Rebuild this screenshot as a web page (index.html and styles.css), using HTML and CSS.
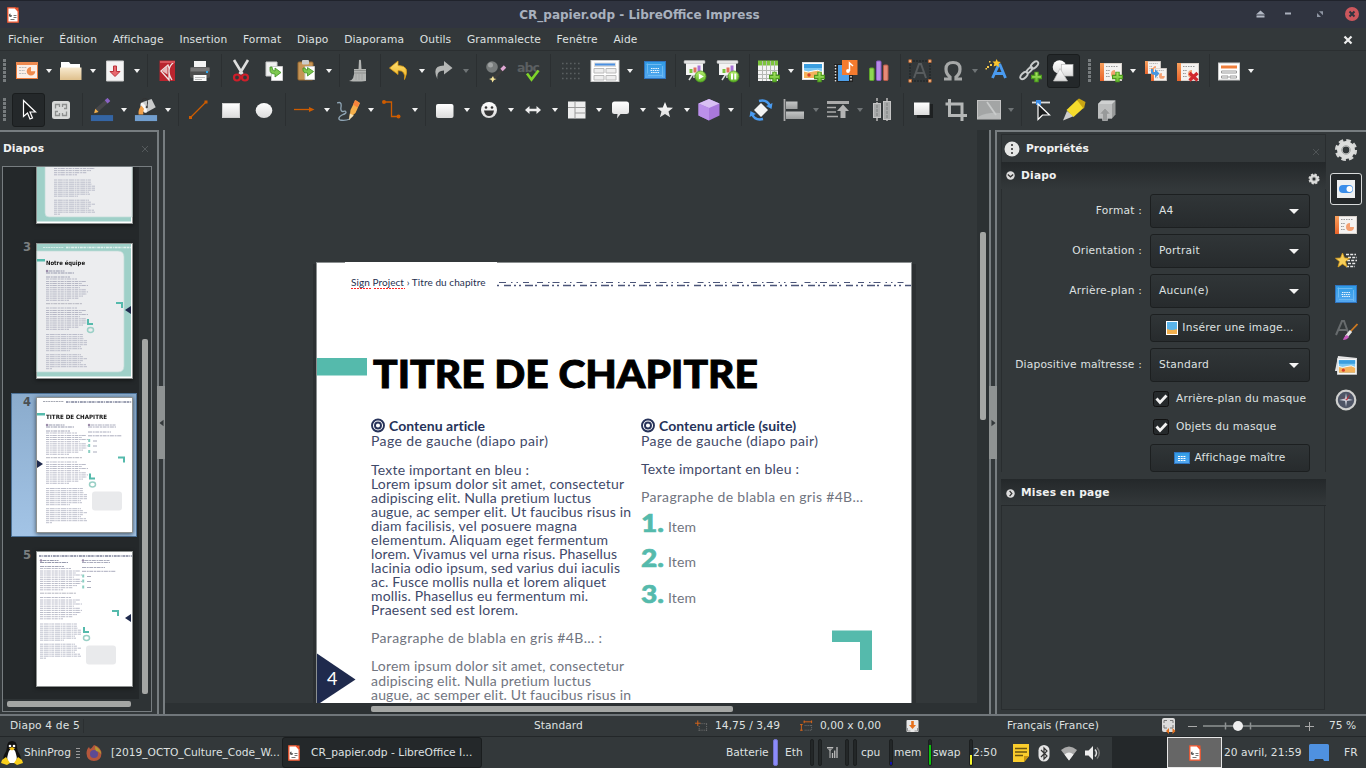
FILE: index.html
```html
<!DOCTYPE html>
<html lang="fr">
<head>
<meta charset="utf-8">
<title>CR_papier.odp - LibreOffice Impress</title>
<link rel="stylesheet" href="styles.css">
</head>
<body>
<svg class="defs" width="0" height="0" aria-hidden="true">
  <defs>
    <linearGradient id="gW" x1="0" y1="0" x2="0" y2="1"><stop offset="0" stop-color="#fff"/><stop offset="1" stop-color="#dcdcdc"/></linearGradient>
    <linearGradient id="gG" x1="0" y1="0" x2="0" y2="1"><stop offset="0" stop-color="#c4c6c6"/><stop offset="1" stop-color="#9c9e9e"/></linearGradient>
    <linearGradient id="gO" x1="0" y1="0" x2="0" y2="1"><stop offset="0" stop-color="#f9a05c"/><stop offset="1" stop-color="#e8632a"/></linearGradient>
    <linearGradient id="gB" x1="0" y1="0" x2="0" y2="1"><stop offset="0" stop-color="#2f9be4"/><stop offset="1" stop-color="#55a8f0"/></linearGradient>
    <linearGradient id="gY" x1="0" y1="0" x2="0" y2="1"><stop offset="0" stop-color="#ffe277"/><stop offset="1" stop-color="#eeb01e"/></linearGradient>
    <linearGradient id="gGr" x1="0" y1="0" x2="0" y2="1"><stop offset="0" stop-color="#b4ec6a"/><stop offset="1" stop-color="#5fb52a"/></linearGradient>
    <linearGradient id="gF" x1="0" y1="0" x2="0" y2="1"><stop offset="0" stop-color="#f8ead0"/><stop offset="1" stop-color="#dfc08c"/></linearGradient>
    <symbol id="plus" viewBox="0 0 10 10"><path d="M3.500 .5h3v3h3v3h-3v3h-3v-3h-3v-3h3z" fill="url(#gGr)" stroke="#4c9a1e"/></symbol>
    <symbol id="slide" viewBox="0 0 22 18"><rect x=".5" y=".5" width="21" height="17" fill="#f5f3f1" stroke="#d8d2cc"/><rect width="4" height="18" fill="url(#gO)"/><path d="M6 3.500h12" stroke="#999" stroke-dasharray="1.500 1"/><path d="M6 7.500h4M6 10.500h3M6 13.500h4" stroke="#999" stroke-dasharray="1.500 .7"/><path d="M15 7a4 4 0 1 0 4 4h-4z" fill="#f4a071"/></symbol>
    <symbol id="doc" viewBox="0 0 12 16"><path d="M.8.8h7.200l3.200 3.500v10.900H.8z" fill="#fff" stroke="#f0542c" stroke-width="1.300"/><path d="M7.500 .5h4V5z" fill="#f0542c"/><path d="M3.500 6.500a1.700 1.700 0 1 0 1.700 1.700H3.500z" fill="#555"/><path d="M6.500 8.500h3M6.500 10.500h3M3.500 12.500h4" stroke="#777"/></symbol>
    <symbol id="master" viewBox="0 0 22 18"><rect x=".5" y=".5" width="21" height="17" fill="url(#gB)" stroke="#2f74c0"/><path d="M2.500 3.500h15M3.500 2.500v10M4 14.500h15M18.500 5v11" stroke="#6db9f3" fill="none"/><path d="M7 7.500h8M6.500 9.500h9M7 11.500h8" stroke="#fff" stroke-width=".9" stroke-dasharray="1.500 .7"/></symbol>
    <symbol id="beach" viewBox="0 0 22 18"><rect x=".5" y=".5" width="21" height="17" fill="#fff" stroke="#ddd"/><rect x="2" y="2" width="18" height="14" fill="#7cc8f2"/><path d="M2 2h18v4H2z" fill="#3a9ee0"/><path d="M2 9q4 2 9 0t9 1v6H2z" fill="#f4b35c"/><path d="M2 9q4 2 9 0t9 1" stroke="#fff" fill="none"/><circle cx="7" cy="13" r="1.700" fill="#d9402a"/></symbol>
    <symbol id="screen" viewBox="0 0 24 24"><path d="M10 15l-4 6M12 14l5 7M11 14v5" stroke="#ddd" stroke-width="1.500"/><rect x="3" y="4" width="17" height="12" fill="#f4f4f4"/><rect x="1" y="1.500" width="21" height="3" rx="1" fill="#e4e4e4" stroke="#bbb" stroke-width=".5"/><rect x="6.500" y="10" width="3" height="4" fill="#7cc43c"/><rect x="10.500" y="8.500" width="3" height="5" fill="#e0705c"/><rect x="14.500" y="6.500" width="3" height="6" fill="#a872d8"/><circle cx="17.500" cy="17.500" r="5.500" fill="url(#gGr)" stroke="#4c9a1e" stroke-width=".8"/></symbol>
    <symbol id="pages" viewBox="0 0 24 24"><path d="M4 3h11v14H4z" fill="#f0f0f0" stroke="#ccc"/><path d="M9.500 7.500h11v14h-11z" fill="#fff" stroke="#ccc"/><path d="M8 8v3q0 4 5 4v3l6-4.500-6-4.500v3q-3 0-3-4z" fill="#7ec850" stroke="#3f8f22" stroke-width=".8"/></symbol>
    <symbol id="gear" viewBox="0 0 24 24"><circle cx="12" cy="12" r="9.600" fill="none" stroke="#d4d5d4" stroke-width="3" stroke-dasharray="4.500 3.040"/><circle cx="12" cy="12" r="6.200" fill="none" stroke="#dcdddc" stroke-width="5.600"/><circle cx="12" cy="12" r="4.300" fill="none" stroke="#a4a6a5"/></symbol>
    <g id="seg" stroke="#a4a6b8" stroke-width="1" opacity=".75">
      <path d="M0 .5h31M0 3h40M0 5h36M0 7h42M0 9.200h34M0 11.300h40M0 13.400h42M0 15.500h41M0 17.600h37M0 19.700h33M0 21.800h23" stroke-dasharray="3.300 .8 1.700 .5 4.500 .9 2.200 .6"/>
    </g>
    <g id="micro">
      <path d="M2.500 -5.500h16M0 -3.500h28" stroke="#9699ad" stroke-dasharray="4 .7 2 .6"/><circle cx="1" cy="-5.500" r="1.200" fill="#9a8ba8"/>
      <path d="M0 .5h24" stroke="#a4a6b8" stroke-dasharray="4 .7 2 .6"/>
      <use href="#seg" y="2"/><path d="M0 27.200h36" stroke="#b4b5bf" stroke-dasharray="4 .7 2 .6"/>
      <use href="#seg" y="31"/>
      <g stroke="#b6b8c6" stroke-dasharray="3 .7 5 .6 1.500 .5" stroke-width=".9"><path d="M0 58h37M0 60.200h37M0 62.200h38M0 64.200h41M0 66.200h41M0 68.200h41M0 70.200h35M0 72.200h36M0 74.200h24M0 78.200h35M0 80.200h37M0 82.200h41M0 84.200h37M0 86.200h35M0 88.200h40M0 90.200h41M0 92.200h6"/></g>
    </g>
    <g id="micro2">
      <path d="M2.500 -5.500h25M0 -3.500h28M0 1.500h23M0 5.300h34M5 10.500h4M5 15.500h4M5 21.500h4" stroke="#a0a3b5" stroke-width=".9" stroke-dasharray="4 .7 2 .6"/><circle cx="1" cy="-5.500" r="1.200" fill="#9a8ba8"/>
      <path d="M1.200 8.500v3M1.200 13.500v3M1.200 19.500v3" stroke="#8ccfc3" stroke-width="2"/>
    </g>
    <g id="marks"><path d="M0 0h7v6h-2V2h-5z" fill="#55baac"/><path d="M-29 17h2v4h4v2h-6z" fill="#55baac"/><ellipse cx="-25.500" cy="28" rx="3" ry="2.400" fill="none" stroke="#9ad0c6" stroke-width="1.500"/></g>
  </defs>
</svg>

<header class="titlebar">
  <svg class="app" viewBox="0 0 12 16"><use href="#doc"/></svg>
  <h1>CR_papier.odp - LibreOffice Impress</h1>
  <svg class="wm" viewBox="0 0 114 28"><path d="M4 14.500l4.500-4 4.500 4zM4.500 15.500h8v2h-8z" fill="#b3b9c5"/><path d="M33 12.500h6v2h-6z" fill="#aab0bc"/><path d="M67 11.200h4v4zM65 13l4 4h-4z" fill="#8f96a3"/><circle cx="100" cy="14" r="7" fill="#cc575d"/><path d="M97.500 11.500l5 5m0-5l-5 5" stroke="#2f343f" stroke-width="2"/></svg>
</header>

<nav class="menubar">
  <a>Fichier</a><a>Édition</a><a>Affichage</a><a>Insertion</a><a>Format</a><a>Diapo</a><a>Diaporama</a><a>Outils</a><a>Grammalecte</a><a>Fenêtre</a><a>Aide</a>
  <svg class="docclose" viewBox="0 0 10 10"><path d="M1.500 1.500l7 7m0-7l-7 7" stroke="#eee" stroke-width="2.200"/></svg>
</nav>

<div class="toolbar">
  <i class="grip"></i>
  <b class="btn dd"><svg viewBox="0 0 24 24"><rect x="1.500" y="3.500" width="21" height="16" fill="#fbeee6" stroke="#ee7d3c"/><path d="M1 3h22v3H1z" fill="#ee8a50"/><path d="M4 8.500h8M4 11.500h6M4 14.500h7" stroke="#bbb" stroke-dasharray="2 .7"/><path d="M16 8a4.300 4.300 0 1 0 4.300 4.300H16z" fill="#f08a4c"/></svg></b>
  <b class="btn dd"><svg viewBox="0 0 24 24"><path d="M2 3h8l1.500 2H21v6H2z" fill="#fff"/><path d="M1 8.500h21.500V21H1z" fill="url(#gF)"/></svg></b>
  <b class="btn dd"><svg viewBox="0 0 24 24"><path d="M3.500 2h17v20h-17z" fill="#f4f4f4" stroke="#ccc"/><path d="M10.500 7h3v5.500h3.500L12 17.500l-5-5h3.500z" fill="#e8696e" stroke="#b9333b"/></svg></b>
  <i class="sep"></i>
  <b class="btn"><svg viewBox="0 0 24 24"><path d="M4.500 1.500h15.500v20.500H4.500z" fill="#b9242e"/><path d="M13 6L6 12l8 9V9zM19 3q-9 7-2 18" stroke="#efe3e3" stroke-width="1.300" fill="none"/><path d="M12.500 7v8.500L7 12z" fill="#e9b9bb"/><path d="M5 2h15v2H5z" fill="#d8525a"/></svg></b>
  <b class="btn"><svg viewBox="0 0 24 24"><path d="M6 2h12v7H6z" fill="#f4f4f4"/><rect x="2" y="8" width="20" height="11" rx="2" fill="#4d4d4d"/><path d="M2.500 8.500h19v4h-19z" fill="#777"/><path d="M5.500 16h13v6h-13z" fill="#fafafa"/><path d="M7 18.500h10M7 20.500h7" stroke="#bbb"/><rect x="18" y="12" width="2" height="2" fill="#27a7f2"/></svg></b>
  <i class="sep"></i>
  <b class="btn"><svg viewBox="0 0 24 24"><path d="M5 1l8.500 14M19 1L10.500 15" stroke="#dedede" stroke-width="2.600"/><circle cx="8" cy="18.500" r="3" fill="none" stroke="#cf1f2a" stroke-width="2.200"/><circle cx="16" cy="18.500" r="3" fill="none" stroke="#cf1f2a" stroke-width="2.200"/></svg></b>
  <b class="btn"><svg viewBox="0 0 24 24"><use href="#pages"/></svg></b>
  <b class="btn dd"><svg viewBox="0 0 24 24"><rect x="3" y="3" width="15" height="18" rx="1" fill="#c69556" stroke="#9a6a30"/><rect x="7" y="1" width="7" height="4.500" rx="1" fill="#ccc"/><path d="M10 7.500h9.500v13H10z" fill="#fff" stroke="#ccc"/><path d="M8 9v2q0 3 4.500 3v3l6-4.500-6-4v2.500q-2.500 0-2.500-2z" fill="#7ec850" stroke="#3f8f22" stroke-width=".8"/></svg></b>
  <i class="sep"></i>
  <b class="btn"><svg viewBox="0 0 24 24"><path d="M12 1q2-1 2 1l.500 8H19v12q-9 1-17 0 6-1 5-12h4.500z" fill="#b3b5b3"/><path d="M7 11.500h12M7 14h12" stroke="#8d8f8d"/><path d="M9 15v6M12 15v6M15 15v6" stroke="#a2a4a2"/></svg></b>
  <i class="sep"></i>
  <b class="btn dd"><svg viewBox="0 0 24 24"><path d="M10 2L1.500 9 10 15.500v-4q8 0 6.500 9Q23 6.500 10 6.500z" fill="url(#gY)" stroke="#d89b15" stroke-width=".8"/></svg></b>
  <b class="btn dd dim"><svg viewBox="0 0 24 24"><path d="M12 2l8.500 7L12 15.500v-4q-8 0-6.500 9Q-1 6.500 12 6.500z" fill="#b4b6b5"/></svg></b>
  <i class="sep"></i>
  <b class="btn"><svg viewBox="0 0 24 24"><circle cx="8" cy="8" r="5.800" fill="#777b7b"/><circle cx="6.500" cy="6" r="2.500" fill="#a0a3a3"/><path d="M9 20L20 9" stroke="#3c3c3c" stroke-width="3.400"/><path d="M17.500 11l3.500-3.500" stroke="#e0a8d4" stroke-width="3.400"/><path d="M9 17l1 2.500 2.500.5-2.500 1-1.500 2.500-1-2.500-2.500-1 2.500-.8z" fill="#f6e49a"/></svg></b>
  <b class="btn"><svg viewBox="0 0 24 24"><text class="abc" x="0" y="13" textLength="23">abc</text><path d="M10 14.500l4.500 6L21.500 11.500" fill="none" stroke="#7fd42a" stroke-width="2.600"/></svg></b>
  <i class="sep"></i>
  <b class="btn"><svg viewBox="0 0 24 24"><path d="M4 4.500h18M4 9.500h18M4 14.500h18M4 19.500h18" stroke="#5a5f61" stroke-width="1.600" stroke-dasharray="1.600 2.400"/></svg></b>
  <b class="btn dd wide"><svg viewBox="0 0 30 24"><rect x="1" y="1.500" width="28" height="21" fill="#fff" stroke="#c8c8c8"/><path d="M4 3.500h22v4.500H4z" fill="#dcdcdc"/><path d="M5 4.500h20v2H5z" fill="#4a90e2"/><path d="M4 9.500h10v4.500H4zM16 9.500h10v4.500H16zM4 16.500h10V21H4zM16 16.500h10V21H16z" fill="#eee" stroke="#bbb"/></svg></b>
  <b class="btn"><svg viewBox="0 0 24 24"><use href="#master" x="2" y="2" width="22" height="18"/></svg></b>
  <i class="sep"></i>
  <b class="btn"><svg viewBox="0 0 24 24"><use href="#screen"/><path d="M15.800 14.500v6l5-3z" fill="#fff"/></svg></b>
  <b class="btn"><svg viewBox="0 0 24 24"><use href="#screen"/><path d="M15 14.500h2v6h-2zM18.300 14.500h2v6h-2z" fill="#fff"/></svg></b>
  <i class="sep"></i>
  <b class="btn dd"><svg viewBox="0 0 24 24"><rect x="1" y="2" width="20" height="20" fill="#f4f4f4"/><path d="M1 1.500h20v5H1z" fill="#7cc43c"/><path d="M1 11.500h20M1 15.500h20M1 19.500h20M5.500 2v20M9.500 2v20M13.500 2v20M17.500 2v20" stroke="#b4b8b2"/><use href="#plus" x="12" y="12.500" width="11" height="11"/></svg></b>
  <b class="btn"><svg viewBox="0 0 24 24"><use href="#beach" x="1" y="3" width="22" height="18"/><use href="#plus" x="13" y="12.500" width="11" height="11"/></svg></b>
  <b class="btn"><svg viewBox="0 0 24 24"><rect x="0" y="5" width="19" height="18" fill="#222"/><path d="M1.500 6v17M17 17v6" stroke="#ddd" stroke-dasharray="1.500 1.500" stroke-width="1.500"/><path d="M4 6h11v16H4z" fill="#4e9fe8"/><rect x="8" y="1" width="15.500" height="15" fill="#f57b2e"/><path d="M15.500 12V4l3.500 3" stroke="#fff" stroke-width="1.500" fill="none"/><circle cx="14" cy="12" r="1.900" fill="#fff"/></svg></b>
  <b class="btn"><svg viewBox="0 0 24 24"><rect x="2.500" y="9" width="4.500" height="12.500" rx="1" fill="#8fd652" stroke="#5fa52a"/><rect x="9.500" y="2" width="4.500" height="19.500" rx="1" fill="#b88ae8" stroke="#8a5ac4"/><rect x="16.500" y="6" width="4.500" height="15.500" rx="1" fill="#e58a78" stroke="#bb5a48"/></svg></b>
  <i class="sep"></i>
  <b class="btn"><svg viewBox="0 0 24 24"><rect x="2" y="2" width="20" height="20" fill="none" stroke="#1d2022" stroke-dasharray="2 1"/><path d="M6 19L11 5h2l5 14M8.500 14h7" fill="none" stroke="#585c5e" stroke-width="2"/><path d="M.8.8h2.700v2.700H.8zM20.500.8h2.700v2.700h-2.700zM.8 20.500h2.700v2.700H.8zM20.500 20.500h2.700v2.700h-2.700z" fill="#f3b98a" stroke="#c0622a" stroke-width=".7"/></svg></b>
  <b class="btn dd dim"><svg viewBox="0 0 24 24"><path d="M3 20h6v-2q-4-3-4-8 0-6.500 7-6.500t7 6.500q0 5-4 8v2h6" fill="none" stroke="#a6a8a8" stroke-width="3.200"/></svg></b>
  <b class="btn"><svg viewBox="0 0 24 24"><path d="M7.500 19L13.500 6H15l5.500 13M10.500 14.500h8" fill="none" stroke="#4a9bf0" stroke-width="2.800"/><path d="M11.500 0l1.300 2.500 3 .5-2.300 2 .5 3-2.700-1.500-2.700 1 .8-3L7.500 2.500h3z" fill="#fbc42c"/><path d="M5 5h2v2H5zM2 7h2v2H2zM4 2h1.500v1.500H4zM.5 9h1.500v1.500H.5z" fill="#f5c84a"/></svg></b>
  <b class="btn"><svg viewBox="0 0 24 24"><g fill="none" stroke="#c9cbcb" stroke-width="1.900"><ellipse cx="6" cy="16.500" rx="2.500" ry="4.500" transform="rotate(45 6 16.500)"/><ellipse cx="11.500" cy="11" rx="1.600" ry="3.800" transform="rotate(45 11.500 11)"/><ellipse cx="16.500" cy="6" rx="2.500" ry="4.500" transform="rotate(45 16.500 6)"/></g><use href="#plus" x="13" y="12.500" width="11" height="11"/></svg></b>
  <b class="btn on"><svg viewBox="0 0 24 24"><circle cx="8.500" cy="8" r="6.800" fill="url(#gW)"/><rect x="10.500" y="5.500" width="11.500" height="11.500" fill="url(#gW)" stroke="#bbb" stroke-width=".7"/><path d="M9 9.500L16.500 22h-14z" fill="url(#gW)" stroke="#bbb" stroke-width=".7"/></svg></b>
  <i class="grip mid"></i>
  <b class="btn dd"><svg viewBox="0 0 24 24"><use href="#slide" x="1" y="4" width="22" height="18"/><use href="#plus" x="13" y="12.500" width="11" height="11"/></svg></b>
  <b class="btn"><svg viewBox="0 0 24 24"><use href="#slide" x="2" y="2" width="16" height="13"/><use href="#slide" x="8" y="9" width="16" height="13"/><path d="M8 10v3q0 3 4 3v3l4.500-4.500L12 10v3H10v-3z" fill="#4796e0"/></svg></b>
  <b class="btn"><svg viewBox="0 0 24 24"><use href="#slide" x="1" y="4" width="22" height="18"/><path d="M13.500 14l8 7.500m0-7.500l-8 7.500" stroke="#d1292f" stroke-width="3.200"/></svg></b>
  <i class="sep"></i>
  <b class="btn dd"><svg viewBox="0 0 24 24"><rect x="1.500" y="4" width="21" height="17" fill="#fff" stroke="#ccc"/><path d="M4 6.500h16v3H4z" fill="#f07f3c"/><path d="M4.500 12h15v2h-15zM4.500 17h6.500v2H4.500zM13 17h6.500v2H13z" fill="#fff" stroke="#999"/></svg></b>
</div>

<div class="toolbar draw">
  <i class="grip"></i>
  <b class="btn on"><svg viewBox="0 0 24 24"><path d="M7.500 2.500v16l4-3.500 2.500 6 2.500-1-2.500-6h5.500z" fill="#1b1d1e" stroke="#fff" stroke-width="1.200"/></svg></b>
  <b class="btn"><svg viewBox="0 0 24 24"><rect x="3" y="3" width="18" height="18" rx="2.500" fill="#d8dad9"/><path d="M6.500 10.500v-4h4v2.500M13.500 9V6.500h4v4H15M17.500 13.500v4h-4V15M10.500 15v2.500h-4v-4H9" fill="none" stroke="#8c8f8e" stroke-width="1.300"/></svg></b>
  <i class="sep"></i>
  <b class="btn dd"><svg viewBox="0 0 24 26"><path d="M6 13.500L18.500 2.500" stroke="#47474a" stroke-width="4.500"/><path d="M16.500 4.200L19.500 1.600" stroke="#8a62c4" stroke-width="4.500"/><path d="M3.500 16.500l1.200-4.800 3.600 3.400z" fill="#f3b04a"/><path d="M0 18.500h24V25H0z" fill="#3465a4"/></svg></b>
  <b class="btn dd"><svg viewBox="0 0 24 26"><path d="M7 5L18 1l4.500 9L12 16z" fill="#c9cbcb"/><ellipse cx="9.500" cy="10.500" rx="2.700" ry="6" transform="rotate(-25 9.500 10.500)" fill="#f6f6f6"/><path d="M7.500 5q0-6 5-4.500Q14.500 3 13 10" fill="none" stroke="#333"/><circle cx="12.800" cy="10" r="1.200" fill="#444"/><path d="M7 8q-4 5-3 10h5q0-5 1-6z" fill="#f0a04a"/><path d="M0 18.500h24V25H0z" fill="#729fcf"/></svg></b>
  <i class="sep"></i>
  <b class="btn"><svg viewBox="0 0 24 24"><path d="M4.500 19.500L20 4" stroke="#ce5c00" stroke-width="1.300"/><path d="M3 18h3v3H3zM18.500 2.500h3v3h-3z" fill="#ce5c00"/></svg></b>
  <b class="btn"><svg viewBox="0 0 24 24"><rect x="3.500" y="5.500" width="17" height="14" fill="url(#gW)" stroke="#cfcfcf"/></svg></b>
  <b class="btn"><svg viewBox="0 0 24 24"><ellipse cx="12" cy="12.500" rx="8.300" ry="7.600" fill="url(#gW)"/></svg></b>
  <i class="sep"></i>
  <b class="btn dd"><svg viewBox="0 0 24 24"><path d="M1 11.500h17" stroke="#ce5c00" stroke-width="1.300"/><path d="M16 9l5.500 2.500-5.500 2.500z" fill="#ce5c00"/></svg></b>
  <b class="btn dd"><svg viewBox="0 0 24 24"><path d="M0 5q5-2 4 4t4 4q3 2-3 4-5 3-2 5 5 1 10-1" fill="none" stroke="#8fa5b5" stroke-width="1.300"/><path d="M12.500 20l1-8 5-10 4.500 3-4.500 10z" fill="#f6b04a"/><path d="M18 2l4.500 3-2 4.500-4.500-3z" fill="#f7843c"/><path d="M12 22l.8-6.500 4 2z" fill="#f9e2b4"/></svg></b>
  <b class="btn dd"><svg viewBox="0 0 24 24"><path d="M3 4h7.500v14.500H17" fill="none" stroke="#ce5c00" stroke-width="1.300"/><circle cx="3" cy="4" r="2" fill="#ce5c00"/><circle cx="17.500" cy="18.500" r="2" fill="#ce5c00"/></svg></b>
  <i class="sep"></i>
  <b class="btn dd"><svg viewBox="0 0 24 24"><rect x="3" y="6" width="17.500" height="14" rx="2" fill="url(#gW)"/></svg></b>
  <b class="btn dd"><svg viewBox="0 0 24 24"><circle cx="12" cy="12" r="8" fill="url(#gW)"/><circle cx="9" cy="9.500" r="1.300" fill="#333"/><circle cx="15" cy="9.500" r="1.300" fill="#333"/><path d="M7 12.500h10q-1 5.500-5 5.500t-5-5.500z" fill="#333"/></svg></b>
  <b class="btn dd"><svg viewBox="0 0 24 24"><path d="M4 12l4.500-4v2.700h7V8L20 12l-4.500 4v-2.700h-7V16z" fill="#eee"/></svg></b>
  <b class="btn dd"><svg viewBox="0 0 24 24"><rect x="3" y="3.500" width="17.500" height="17" fill="#eee"/><path d="M10 3.500v17M3 9.500H20.500M10 15h10.500" stroke="#9a9a9a"/></svg></b>
  <b class="btn dd"><svg viewBox="0 0 24 24"><path d="M5.500 3.500h12q2.500 0 2.500 2.500v7.500q0 2.500-2.500 2.500h-6L8 20.500 8.500 16h-3Q3 16 3 13.500V6q0-2.500 2.500-2.500z" fill="url(#gW)"/></svg></b>
  <b class="btn dd"><svg viewBox="0 0 24 24"><path d="M12 4l2.200 5.400 5.800.3-4.500 3.700 1.600 5.900L12 16l-5.100 3.300 1.600-5.900L4 9.700l5.800-.3z" fill="url(#gW)"/></svg></b>
  <b class="btn dd"><svg viewBox="0 0 24 24"><path d="M12 1l10.500 4.500v12L12 22.500 1.500 17.500v-12z" fill="#a978dc"/><path d="M12 1l10.500 4.500L12 10 1.500 5.500z" fill="#d9c0f4"/><path d="M1.500 5.500L12 10v12.500l-10.500-5z" fill="#bb90ea"/></svg></b>
  <i class="sep"></i>
  <b class="btn"><svg viewBox="0 0 24 24"><path d="M12 5l7 7-7 7-7-7z" fill="#f4f4f4"/><path d="M10 3q8-2 11 5M14 21q-8 2-11-5" fill="none" stroke="#4a9bf0" stroke-width="2.400"/><path d="M23.500 5l-1 6-5.500-3zM.5 19l1-6L7 16z" fill="#4a9bf0"/></svg></b>
  <b class="btn dd dim"><svg viewBox="0 0 24 24"><path d="M2.500 1v22" stroke="#aaa" stroke-width="1.800"/><rect x="4" y="3.500" width="11.500" height="7.500" fill="url(#gG)"/><rect x="4" y="13.500" width="18" height="7.500" fill="url(#gG)"/></svg></b>
  <b class="btn dd dim"><svg viewBox="0 0 24 24"><path d="M1 4.500h22" stroke="#aaa" stroke-width="3"/><path d="M1 9.500h9M1 14h9M1 18.500h11" stroke="#aaa" stroke-width="1.500"/><path d="M17 6.500l6 6.500h-3.500v7h-5v-7H11z" fill="#b4b4b4"/></svg></b>
  <b class="btn"><svg viewBox="0 0 24 24"><path d="M7 0v24M17 0v24" stroke="#999" stroke-width="2" stroke-dasharray="3 1"/><rect x="3.500" y="5.500" width="7" height="14" fill="#a8aaaa" stroke="#c4c4c4"/><rect x="13.500" y="3.500" width="7" height="18" fill="#a8aaaa" stroke="#c4c4c4"/><path d="M7 7v11M17 5v15" stroke="#7d8080" stroke-dasharray="3 1"/></svg></b>
  <i class="sep"></i>
  <b class="btn"><svg viewBox="0 0 24 24"><path d="M6 6h16v14H6z" fill="#1e2122"/><rect x="3" y="4.500" width="15.500" height="12.500" fill="url(#gW)"/></svg></b>
  <b class="btn"><svg viewBox="0 0 24 24"><path d="M5.500 1v16.500H23M1.500 6h16.500v17" fill="none" stroke="#b5b7b7" stroke-width="3"/></svg></b>
  <b class="btn dd dim"><svg viewBox="0 0 24 24"><rect x=".5" y="2.500" width="23" height="18.500" fill="#a3a5a5" stroke="#c4c4c4"/><path d="M1 19q9-5 22-4v5.500H1z" fill="#b9bbbb"/><path d="M10 4l9 13" stroke="#c8caca" stroke-width="1.800"/></svg></b>
  <i class="sep"></i>
  <b class="btn"><svg viewBox="0 0 24 24"><path d="M3 4.500h18" stroke="#ddd" stroke-width="1.800"/><rect x="7" y="2" width="5" height="5" fill="#3b8eea"/><path d="M9 6v15.500l4.500-4.500h7z" fill="#1b1d1e" stroke="#fff" stroke-width="1.200"/></svg></b>
  <b class="btn"><svg viewBox="0 0 24 24"><path d="M1 22.500L5 13l7 5z" fill="#ccc"/><path d="M4.500 12L15 2l7.500 2-1 6-10 9z" fill="#f5dc2c"/><path d="M15 2l2-1.500L23.500 4l-1.500 6.500-1-.5z" fill="#c9a514"/></svg></b>
  <b class="btn"><svg viewBox="0 0 24 24"><path d="M3 6l3.500-3.500h14v14L17 20.500H3z" fill="#989a9a"/><path d="M3 6h14v14.500H3z" fill="#bcbebe"/><path d="M3 6l3.500-3.500h14L17 6z" fill="#cfd1d1"/><path d="M10 10l5.500 6h-3v6.500h-5V16h-3z" fill="#989a9a" stroke="#c9c9c9" stroke-width=".6"/></svg></b>
</div>

<main class="work">
  <aside class="slides">
    <div class="phead"><span>Diapos</span><svg viewBox="0 0 8 8"><path d="M1 1l6 6m0-6l-6 6" stroke="#54595b"/></svg></div>
    <div class="list">
      <div class="pane">
        <div class="item cut"><em></em>
          <svg viewBox="0 78 97 59" width="97" height="59"><rect y="0" width="97" height="136" fill="#8d9190"/><rect x="1" width="95" height="135" fill="#fff"/><rect x="1" y="0" width="94" height="133.500" fill="#9fd0c8"/><path d="M9 0v125q0 4 4 4h83V0z" fill="#ecedef" stroke="#c2dcd8" stroke-width=".7"/><use href="#micro" x="18" y="34"/></svg></div>
        <div class="item"><em>3</em>
          <svg viewBox="0 0 97 136" width="97" height="136"><rect width="97" height="136" fill="#8d9190"/><rect x="1" y="1" width="95" height="134" fill="#fff"/><rect x="1" y="1" width="94" height="132.500" fill="#9fd0c8"/><path d="M1 8h81q6 0 6 6v109q0 6-6 6H1z" fill="#ecedef" stroke="#c2dcd8" stroke-width=".7"/><path d="M7 4.500h21" stroke="#d6ebe7" stroke-dasharray="2 .6"/><path d="M30 4.500h65" stroke="#e2f1ee" stroke-width="1.500" stroke-dasharray="2.500 .8 1 .8 3 .6"/><path d="M1 16h8v2.500H1z" fill="#55baac"/><text class="tt" x="10" y="21.500" textLength="39" lengthAdjust="spacingAndGlyphs">Notre équipe</text><use href="#micro" x="10" y="33.500"/><use href="#marks" x="80" y="59"/><path d="M95 63l-6 4 6 4z" fill="#1f2a4d"/></svg></div>
        <div class="item sel"><em>4</em>
          <svg viewBox="0 0 97 136" width="97" height="136"><rect width="97" height="136" fill="#8d9190"/><rect x="1" y="1" width="95" height="134" fill="#fff"/><path d="M7 4.500h21" stroke="#a5a8b2" stroke-dasharray="2 .6"/><path d="M30 5h66" stroke="#7d839a" stroke-width="1.500" stroke-dasharray="2.500 .8 1 .8 3 .6"/><path d="M1 16h8v2.500H1z" fill="#55baac"/><text class="tt" x="10" y="21.500" textLength="61" lengthAdjust="spacingAndGlyphs">TITRE DE CHAPITRE</text><use href="#micro" x="10" y="33.500"/><use href="#micro2" x="52" y="33.500"/><use href="#marks" x="82" y="59.500"/><rect x="56" y="94.500" width="30" height="19" rx="3" fill="#e9eaec"/><path d="M1 63l6 4-6 4z" fill="#1f2a4d"/></svg></div>
        <div class="item"><em>5</em>
          <svg viewBox="0 0 97 136" width="97" height="136"><rect width="97" height="136" fill="#8d9190"/><rect x="1" y="1" width="95" height="134" fill="#fff"/><path d="M3 5h93" stroke="#7d839a" stroke-width="1.500" stroke-dasharray="2.500 .8 1 .8 3 .6"/><use href="#micro" x="4" y="15"/><use href="#micro2" x="46" y="15"/><use href="#marks" x="76" y="59"/><rect x="50" y="94.500" width="30" height="19" rx="3" fill="#e9eaec"/><path d="M95 63l-6 4 6 4z" fill="#1f2a4d"/></svg></div>
      </div>
      <div class="vtrack"><i></i></div>
      <div class="htrack"><i></i></div>
    </div>
  </aside>
  <div class="split"><i><svg viewBox="0 0 6 8"><path d="M5.500 0v8L.5 4z" fill="#34393b"/></svg></i></div>

  <section class="canvas">
    <svg class="sheet" viewBox="165 130 812 573" width="812" height="573">
      <path d="M313 264h603v440H313z" fill="#2c3032"/>
      <path d="M316 262h596v442H316z" fill="#8b8f90"/>
      <path d="M317 263h594v441H317z" fill="#fff"/><path d="M345 262h152v2H345z" fill="#fff"/>
      <text class="s crumb" x="351" y="286" textLength="134.500">Sign Project › Titre du chapitre</text>
      <path d="M351 288.500h20M374 288.500h31" stroke="#f22" stroke-dasharray="2 1"/>
      <path d="M499 282.500h412" stroke="#4b5578" stroke-width="1.200" stroke-dasharray="7 5 1.500 4 1.500 5 6 8 6 5 1.500 3"/>
      <path d="M497 285.500h414" stroke="#4b5578" stroke-width="1.300" stroke-dasharray="2 5 7 3 2 3 2 4 8 2"/>
      <path d="M317 358h50v17.500h-50z" fill="#55baac"/>
      <text class="s h" x="373" y="388" textLength="385" lengthAdjust="spacingAndGlyphs">TITRE DE CHAPITRE</text>
      <g fill="none" stroke="#27335a" stroke-width="1.900"><circle cx="378" cy="425.500" r="6"/><circle cx="378" cy="425.500" r="3"/><circle cx="648" cy="425.500" r="6"/><circle cx="648" cy="425.500" r="3"/></g>
      <g class="s blue">
        <text class="bd" x="389" y="431" textLength="96">Contenu article</text>
        <text x="371" y="446" textLength="177">Page de gauche (diapo pair)</text>
        <text x="371" y="475" textLength="158">Texte important en bleu :</text>
        <text x="371" y="489" textLength="253">Lorem ipsum dolor sit amet, consectetur</text>
        <text x="371" y="503" textLength="220">adipiscing elit. Nulla pretium luctus</text>
        <text x="371" y="517" textLength="260">augue, ac semper elit. Ut faucibus risus in</text>
        <text x="371" y="531" textLength="206">diam facilisis, vel posuere magna</text>
        <text x="371" y="545" textLength="237">elementum. Aliquam eget fermentum</text>
        <text x="371" y="559" textLength="246">lorem. Vivamus vel urna risus. Phasellus</text>
        <text x="371" y="573" textLength="249">lacinia odio ipsum, sed varius dui iaculis</text>
        <text x="371" y="587" textLength="235">ac. Fusce mollis nulla et lorem aliquet</text>
        <text x="371" y="601" textLength="217">mollis. Phasellus eu fermentum mi.</text>
        <text x="371" y="615" textLength="147">Praesent sed est lorem.</text>
        <text class="bd" x="659" y="431" textLength="137">Contenu article (suite)</text>
        <text x="641" y="446" textLength="177">Page de gauche (diapo pair)</text>
        <text x="641" y="474" textLength="158">Texte important en bleu :</text>
      </g>
      <g class="s grey">
        <text x="371" y="643" textLength="231">Paragraphe de blabla en gris #4B… :</text>
        <text x="371" y="671" textLength="253">Lorem ipsum dolor sit amet, consectetur</text>
        <text x="371" y="686" textLength="220">adipiscing elit. Nulla pretium luctus</text>
        <text x="371" y="700" textLength="260">augue, ac semper elit. Ut faucibus risus in</text>
        <text x="641" y="502" textLength="222">Paragraphe de blabla en gris #4B…</text>
        <text x="668" y="532" textLength="28">Item</text><text x="668" y="567" textLength="28">Item</text><text x="668" y="603" textLength="28">Item</text>
      </g>
      <g class="s num"><text x="641" y="532" textLength="23" lengthAdjust="spacingAndGlyphs">1.</text><text x="641" y="567" textLength="23" lengthAdjust="spacingAndGlyphs">2.</text><text x="641" y="603" textLength="23" lengthAdjust="spacingAndGlyphs">3.</text></g>
      <path d="M832 630.500h40V670h-12v-28h-28z" fill="#55baac"/>
      <path d="M317 653.500l38.500 26L320 703h-3z" fill="#1f2a4d"/>
      <text class="s pg" x="327" y="685">4</text>
    </svg>
    <div class="cv"><i></i></div>
    <div class="ch"><i></i></div>
  </section>

  <div class="split right"><i><svg viewBox="0 0 6 8"><path d="M.5 0v8l5-4z" fill="#34393b"/></svg></i></div>
  <aside class="props">
    <div class="phd"><svg viewBox="0 0 16 16"><circle cx="8" cy="8" r="7.500" fill="#e6e7e6"/><path d="M8 3v10" stroke="#555" stroke-width="2" stroke-dasharray="2 2"/></svg><span>Propriétés</span><svg class="x" viewBox="0 0 8 8"><path d="M1 1l6 6m0-6l-6 6" stroke="#4f5456"/></svg></div>
    <div class="band"><svg viewBox="0 0 10 10"><circle cx="5" cy="5" r="4.700" fill="#ddd"/><path d="M2 4l3 2.500L8 4" fill="none" stroke="#333" stroke-width="1.400"/></svg><span>Diapo</span><svg class="g" viewBox="0 0 24 24"><use href="#gear"/></svg></div>
    <div class="form">
      <label>Format :</label><div class="sl">A4</div>
      <label>Orientation :</label><div class="sl">Portrait</div>
      <label>Arrière-plan :</label><div class="sl">Aucun(e)</div>
      <span></span><div class="pb"><svg viewBox="0 0 12 14" class="i1"><rect width="12" height="14" fill="#fff"/><path d="M1 1h10v12H1z" fill="#5ab4ea"/><path d="M1 8q5 2 10 0v5H1z" fill="#f2b04e"/></svg>Insérer une image...</div>
      <label>Diapositive maîtresse :</label><div class="sl">Standard</div>
    </div>
    <div class="checks">
      <div><svg viewBox="0 0 16 16"><rect x=".5" y=".5" width="15" height="15" rx="2" fill="#25292b" stroke="#111"/><path d="M3.500 7.500l3.500 4 6.500-7" fill="none" stroke="#f2f2f2" stroke-width="2.800"/></svg>Arrière-plan du masque</div>
      <div><svg viewBox="0 0 16 16"><rect x=".5" y=".5" width="15" height="15" rx="2" fill="#25292b" stroke="#111"/><path d="M3.500 7.500l3.500 4 6.500-7" fill="none" stroke="#f2f2f2" stroke-width="2.800"/></svg>Objets du masque</div>
      <div class="pb"><svg viewBox="0 0 16 12" class="i2"><rect x=".5" y=".5" width="15" height="11" fill="url(#gB)" stroke="#2f74c0"/><path d="M4 4.500h8M4 6.500h8M4 8.500h8" stroke="#fff" stroke-dasharray="2 .7"/></svg>Affichage maître</div>
    </div>
    <div class="band low"><svg viewBox="0 0 10 10"><circle cx="5" cy="5" r="4.700" fill="#ddd"/><path d="M4 2l2.500 3L4 8" fill="none" stroke="#333" stroke-width="1.400"/></svg><span>Mises en page</span></div>
  </aside>
  <nav class="tabs">
    <b><svg viewBox="0 0 24 24"><use href="#gear"/></svg></b>
    <b class="on"><svg viewBox="0 0 24 24"><rect x="3" y="3" width="18" height="18" fill="#eef0f1"/><rect x="5" y="8" width="14" height="8" rx="4" fill="#3b8eea"/><circle cx="15.500" cy="12" r="3" fill="#fff"/></svg></b>
    <b><svg viewBox="0 0 24 24"><use href="#slide" x="1" y="3" width="22" height="18"/></svg></b>
    <b><svg viewBox="0 0 24 24"><path d="M12 6.500h10M14 9.500h9M13 12.500h10M14 15.500h8M12 18.500h9" stroke="#e8e8e8" stroke-width="1.300" stroke-dasharray="3 1.200"/><path d="M8.500 5l2 5 5 .3-4 3.300 1.500 5.400-4.500-3-4.500 3 1.500-5.400-4-3.300 5-.3z" fill="#f7cf5a" stroke="#d8a020" stroke-width=".8"/></svg></b>
    <b><svg viewBox="0 0 24 24"><use href="#master" x="1" y="2" width="22" height="18"/></svg></b>
    <b><svg viewBox="0 0 24 24"><path d="M2 17L8 3h2l5 14M4.500 12h8" fill="none" stroke="#676b6d" stroke-width="2"/><path d="M15 15L23.500 6" stroke="#d07a20" stroke-width="1.800"/><path d="M12 19l5-6" stroke="#e4e4e4" stroke-width="3"/><path d="M9 22q1-4 4-5l2 2q-2 3-6 3z" fill="#c85bc0"/></svg></b>
    <b><svg viewBox="0 0 24 24"><path d="M4 3l19 2-2 13L1 18z" fill="#e6e6e6"/><use href="#beach" x="3" y="5" width="20" height="17"/></svg></b>
    <b><svg viewBox="0 0 24 24"><circle cx="12" cy="12" r="9.300" fill="#4e5566" stroke="#cfd0cf" stroke-width="2.200"/><path d="M12 5l1 5.500L19 12l-6 1L12 19l-1-6-6-1 6-1.500z" fill="#c8ccd6"/><path d="M6 8l6 3.500L16.500 5.500 13 12.500z" fill="#c62a35"/></svg></b>
  </nav>
</main>

<footer class="status">
  <span class="a">Diapo 4 de 5</span><span class="l b">Standard</span>
  <span class="l"><svg viewBox="0 0 14 12"><path d="M3 0v6M0 3h6" stroke="#d9661a"/><path d="M6 3.500h8M4 10.500h9M4.500 6v5M12.500 4v7" stroke="#777" stroke-dasharray="1 1"/></svg></span><span>14,75 / 3,49</span>
  <span><svg viewBox="0 0 14 12"><path d="M4 1.500h9M4.500 0v3M12.500 0v3M1.500 4v7M0 4.500h3M0 10.500h3" stroke="#d9661a"/><path d="M5 5.500h8M5 10.500h8M12.500 5v5" stroke="#777" stroke-dasharray="1 1"/></svg></span><span>0,00 x 0,00</span>
  <span class="l"><svg viewBox="0 0 12 12"><rect width="12" height="12" rx="1" fill="#e8e8e8"/><path d="M4.700 1h2.600v4H9.500L6 9 2.500 5h2.200z" fill="#e5701c"/><path d="M1 8v3h3M11 8v3H8" stroke="#999" fill="none"/></svg></span>
  <span class="l f">Français (France)</span>
  <span><svg class="fit" viewBox="0 0 14 16"><rect width="13" height="14" rx="2" fill="#dcdcdc"/><path d="M2 5V2.500h3M8 2.500h3V5M2 7v3h3M8 10h3V7" stroke="#777" fill="none"/><path d="M4 13l3-3v6zM13.500 13l-3-3v6zM7 13h4" fill="#e5701c"/></svg></span>
  <span><svg class="zoom" viewBox="0 0 130 16"><path d="M0 8.500h9M117 8.500h9M121.500 4v9" stroke="#aaa"/><path d="M15 8h97M37.500 4.500v7M62.500 4.500v7" stroke="#8e9293" stroke-width="1.500"/><circle cx="50" cy="8" r="5" fill="#eee"/></svg></span>
  <span class="z">75 %</span>
</footer>

<footer class="task">
  <span><svg class="tux" viewBox="0 0 22 26"><path d="M11 1q5 0 5 6 0 4 3 8 2 5-1 8H4q-3-3-1-8 3-4 3-8 0-6 5-6z" fill="#111"/><path d="M11 9q3 0 4 5 2 6-1 9H8q-3-3-1-9 1-5 4-5z" fill="#fff"/><circle cx="9" cy="6" r="1.300" fill="#fff"/><circle cx="13" cy="6" r="1.300" fill="#fff"/><path d="M8 8.500l3-1.500 3 1.500-3 2z" fill="#f7c411"/><path d="M1 20l4-3 4 6-3 2-6-2zM21 20l-4-3-4 6 3 2 6-2z" fill="#f9cf1c"/></svg></span>
  <span>ShinProg</span>
  <span><svg class="dr" viewBox="0 0 5 12"><path d="M0 1.500h4M0 4.500h4M0 7.500h4M0 10.500h4" stroke="#999"/></svg></span>
  <span><svg class="ff" viewBox="0 0 16 16"><path d="M8 0q7 2 7.500 8.500Q15 16 8 16T.5 8.500Q.5 4 3 2l1 2q2-1 4-4z" fill="#b5573c"/><circle cx="8" cy="9" r="4" fill="#5d4a94"/><path d="M9 1q6 3 6 8-2-3-5-3-1-2-1-5z" fill="#b39a34"/></svg></span>
  <span>[2019_OCTO_Culture_Code_W...</span>
  <span class="cur"><svg viewBox="0 0 12 16"><use href="#doc"/></svg>CR_papier.odp - LibreOffice I...</span>
  <span></span>
  <span>Batterie</span><span><i class="m pu"></i></span><span>Eth</span><span><i class="m"></i></span><span><i class="m"></i></span>
  <span><svg class="ant" viewBox="0 0 11 13"><path d="M0 1.500h6L3 4.500zM3 1v11" stroke="#bbb" fill="none"/><path d="M5.500 12V7M7.700 12V4.500M10 12V1" stroke="#bbb" stroke-width="1.300"/></svg></span>
  <span><i class="m"></i></span><span><i class="m"></i></span><span>cpu</span><span><i class="m bl"></i></span><span>mem</span><span><i class="m gr"></i></span><span>swap</span><span><i class="m ye"></i></span><span>2:50</span>
  <span><svg class="note" viewBox="0 0 18 20"><path d="M1 1h16v12l-5 6H1z" fill="#fbcd2c"/><path d="M17 13h-5v6z" fill="#c89410"/><path d="M3 5.500h12M3 9h12M3 12.500h8" stroke="#6b5410" stroke-width="1.400"/></svg></span>
  <span><svg class="bt" viewBox="0 0 12 18"><rect x=".5" y="1" width="11" height="16.500" rx="5.500" fill="#e4e4e4"/><path d="M3 6l6 6-3 3V4l3 3-6 6" fill="none" stroke="#333" stroke-width="1.200"/></svg></span>
  <span><svg class="wf" viewBox="0 0 18 16"><path d="M9 15.500L1 5q8-7 16 0z" fill="#aaa"/><path d="M9 15.500L4.500 9.500q4.500-4 9 0z" fill="#eee"/></svg></span>
  <span><svg class="wf" viewBox="0 0 18 16"><path d="M1 5.500h3.500L9 1v14l-4.500-4.500H1z" fill="#eee"/><path d="M11 4.500q3 3.500 0 7" stroke="#ddd" fill="none" stroke-width="1.500"/><path d="M13 2.500q4.500 5.500 0 11" stroke="#777" fill="none" stroke-width="1.500"/></svg></span>
  <span class="pager"></span><span class="pager now"><svg viewBox="0 0 12 16"><use href="#doc"/></svg></span>
  <span>20 avril, 21:59</span><span><svg class="desk" viewBox="0 0 20 17"><path d="M1.500 0h17q1.500 0 1.500 1.500V17h-5l-1-2H6l-1 2H0V1.500Q0 0 1.500 0z" fill="#4f91e0"/></svg></span><span>FR</span>
</footer>
</body>
</html>
```
FILE: styles.css
```css
* { box-sizing: border-box; }
html, body { margin: 0; height: 768px; overflow: hidden; }
body {
  width: 1366px;
  background: #33383a;
  color: #dfe1e1;
  font: 10.67px/14px "DejaVu Sans", sans-serif;
  display: flex;
  flex-direction: column;
}
svg { display: block; flex: none; }
.defs { position: absolute; }
i, em { font-style: normal; }

.titlebar { height: 28px; flex: none; background: #303440; border-top: 1px solid #20232c; display: grid; grid-template-columns: 27px 1225px 114px; align-items: center; }
.titlebar .app { width: 12px; height: 16px; margin-left: 7px; }
.titlebar h1 { margin: 0; font-size: 12px; font-weight: bold; color: #a9b1be; text-align: center; white-space: nowrap; }
.titlebar .wm { width: 114px; height: 28px; margin-top: -1px; }

.menubar { height: 23px; flex: none; display: flex; align-items: center; padding: 1px 13px 0 8px; gap: 15.700px; border-bottom: 1px solid #2b2f31; letter-spacing: .12px; }
.docclose { width: 10px; height: 10px; margin-left: auto; }

.toolbar { height: 39px; flex: none; display: flex; align-items: center; }
.toolbar.draw { height: 40px; padding-bottom: 1px; }
.grip { width: 3px; height: 23px; margin: 0 4.500px 0 3px; background: repeating-linear-gradient(#777c7e 0 3px, transparent 3px 4px); }
.grip.mid { margin: 0 4px 0 8px; }
.draw .grip { margin-right: 5.500px; }
.btn { width: 33px; height: 34px; flex: none; display: flex; align-items: center; justify-content: center; }
.btn svg { width: 24px; height: 24px; }
.btn.dd { width: 44px; justify-content: flex-start; padding-left: 4px; }
.btn.dd::after { content: ""; margin-left: 7px; border: 3.500px solid transparent; border-top: 4px solid #f2f2f2; border-bottom: 0; }
.btn.dd.dim::after { border-top-color: #6f7476; }
.btn.wide { width: 51px; padding-left: 3px; }
.btn.wide svg { width: 30px; }
.btn.on { background: #24282a; border: 1px solid #1a1d1e; border-radius: 3px; }
.sep { width: 8px; height: 33px; flex: none; background: linear-gradient(#2b2f31, #2b2f31) 4px 0 / 1px 100% no-repeat; }
.abc { font: bold 12.500px "DejaVu Sans", sans-serif; fill: #5b5f61; }

.work { height: 586px; flex: none; display: flex; border-bottom: 2px solid #70767a; }
.slides { width: 157px; border-top: 2px solid #777d80; background: #33383a; }
.phead { height: 34px; display: flex; align-items: center; justify-content: space-between; padding: 0 8px 0 3px; font-weight: bold; color: #f0f1f1; }
.phead svg { width: 8px; height: 8px; }
.list { width: 150px; height: 546px; margin-left: 2px; border: 1px solid #777d80; background: #24292b; display: grid; grid-template: 532px 12px / 136px 12px; }
.pane { overflow: hidden; display: flex; flex-direction: column; gap: 10px; background: #24282a; }
.item { width: 126px; height: 144px; flex: none; margin-left: 8px; display: flex; align-items: flex-start; padding: 4px 0 0; }
.item em { width: 25px; padding: 1px 5px 0 0; text-align: right; font: bold 11.500px/14px "DejaVu Sans", sans-serif; color: #7b7f80; margin-top: -4px; }
.item svg { filter: drop-shadow(0 1px 2px #0009); }
.item.cut { height: 62px; padding: 0; }
.item.cut svg { margin-top: -1px; }
.item.sel { background: linear-gradient(#8aabcc, #a3c4e6); outline: 1px solid #4d7297; outline-offset: -1px; }
.item.sel em { color: #4a5054; margin-top: -3px; }
.tt { font: bold 6px "DejaVu Sans", sans-serif; fill: #111; }
.vtrack { background: #2e3335; padding: 172px 0 0 3px; }
.vtrack i { display: block; width: 6px; height: 355px; border-radius: 2px; background: #a4a6a4; }
.htrack { grid-column: 1 / 3; background: #2e3335; padding: 2px 0 0 4px; }
.htrack i { display: block; width: 124px; height: 6px; border-radius: 2px; background: #a4a6a4; }

.split { width: 8px; border: solid #777d80; border-width: 0 2px; display: flex; align-items: center; padding-top: 1px; }
.split i { width: 8px; height: 73px; flex: none; margin: 0 -2px; background: #8f9393; display: flex; align-items: center; justify-content: center; }
.split svg { width: 5px; height: 8px; }
.canvas { width: 824px; display: grid; grid-template: 573px 11px / 812px 12px; }
.cv { background: #2c3133; padding: 102px 0 0 3px; }
.cv i { display: block; width: 6px; height: 188px; border-radius: 2px; background: #a4a6a4; }
.ch { grid-column: 1 / 3; background: #2c3133; padding: 3px 0 0 206px; }
.ch i { display: block; width: 362px; height: 6px; border-radius: 2px; background: #a4a6a4; }
.s { font-family: Lato, sans-serif; font-size: 14px; font-variant-ligatures: none; }
.crumb { font-size: 10px; fill: #26304f; }
.h { font-size: 38.500px; font-weight: 900; fill: #000; stroke: #000; stroke-width: .9; }
.blue { fill: #3f4969; }
.grey { fill: #71757f; }
.bd { font-weight: bold; fill: #27335a; }
.num { font-size: 25px; font-weight: 900; fill: #55baac; stroke: #55baac; stroke-width: .6; }
.pg { font-size: 18px; fill: #fff; }

.props { width: 329px; border-top: 2px solid #777d80; padding: 2px 0 0 4px; letter-spacing: .2px; }
.props::after { content: ""; display: block; height: 203px; margin-right: 1px; border: solid #292d2f; border-width: 0 1px 1px; }
.phd { height: 28px; border: 1px solid #292d2f; border-bottom: 0; display: flex; align-items: center; gap: 6px; padding: 1px 5px 0 2px; font-weight: bold; color: #f0f1f1; letter-spacing: 0; }
.phd svg { width: 16px; height: 16px; }
.phd .x { width: 8px; height: 8px; margin: 5px 0 0 auto; }
.band { height: 27px; background: linear-gradient(#24282a, #33383a); display: flex; align-items: center; gap: 6px; padding-left: 5px; font-weight: bold; color: #f0f1f1; }
.band svg { width: 9px; height: 9px; }
.band .g { width: 12px; height: 12px; margin: 6px 6px 0 auto; }
.band.low { border-bottom: 1px solid #25292b; margin-top: 7px; padding-top: 2px; }
.form { display: grid; grid-template-columns: 140px 160px; column-gap: 8px; row-gap: 6px; padding-top: 5px; align-items: center; border: solid #292d2f; border-width: 0 1px; }
.form label { text-align: right; white-space: nowrap; }
.sl, .pb { width: 160px; height: 34px; border: 1px solid #1c1f20; border-radius: 3px; background: linear-gradient(#303537, #272b2d); display: flex; align-items: center; padding: 0 10px 1px 8px; }
.sl::after { content: ""; margin-left: auto; border: 5px solid transparent; border-top: 5px solid #f4f4f4; border-bottom: 0; margin-top: 1px; }
.pb { height: 28px; justify-content: center; gap: 4px; padding: 0 0 1px; }
.i1 { width: 12px; height: 14px; }
.checks { padding: 2px 0 0 148px; border: solid #292d2f; border-width: 0 1px; }
.checks > div:not(.pb) { height: 28px; display: flex; align-items: center; gap: 7px; padding: 2px 0 0 3px; white-space: nowrap; }
.checks > div svg { width: 16px; height: 16px; }
.checks > .pb { margin-top: 4px; }
.checks > .pb svg { width: 16px; height: 12px; }
.tabs { width: 40px; border-top: 2px solid #777d80; display: flex; flex-direction: column; align-items: center; }
.tabs b { width: 32px; height: 35px; flex: none; display: flex; align-items: center; justify-content: center; }
.tabs b svg { width: 24px; height: 24px; }
.tabs b.on { height: 32px; margin: 6px 0 2px; border: 1px solid #d8dada; border-radius: 3px; background: #24282a; }

.status { height: 21px; flex: none; border-bottom: 1px solid #232729; display: grid; grid-template-columns: 84px 602px 29px 85px 20px 81px 65px 192px 30px 142px 36px; align-items: center; white-space: nowrap; letter-spacing: .05px; }
.status .a { padding-left: 10px; border-right: 1px solid #2b2f31; letter-spacing: .15px; }
.status .b { padding-left: 450px; }
.status .l { border-right: 1px solid transparent; }
.status span:nth-child(3) { padding-left: 9px; }
.status span:nth-child(7) { padding-left: 5px; }
.status .f { padding-left: 41px; }
.status svg { width: 13px; height: 12px; }
.status .fit { width: 14px; height: 16px; margin-left: 4px; }
.status .zoom { width: 130px; height: 16px; }
.status .z { margin-left: -1px; }

.task { height: 31px; flex: none; background: #33383a; display: grid; align-items: center; white-space: nowrap;
  grid-template-columns: 24px 52px 10px 25px 171px 200px 244px 48px 11px 25px 8px 9px 18px 8px 8px 28px 5px 34px 5px 36px 4px 39px 32px 24px 24px 20px 55px 55px 87px 35px 22px; }
.task > span { display: block; }
.tux { width: 22px; height: 26px; margin-left: 1px; }
.dr { width: 5px; height: 12px; }
.ff { width: 16px; height: 16px; }
.task .cur { height: 31px; background: #24282a; border: 1px solid #1a1d1e; border-radius: 3px; display: flex; align-items: center; padding-left: 5px; gap: 11px; }
.cur svg, .now svg { width: 12px; height: 16px; }
.m { display: block; width: 4px; height: 27px; border-radius: 2px; background: #232728; border: 1px solid #1c1f20; }
.m.pu { width: 5px; margin-left: -1px; background: #8b8bfb; border-color: #7474c8; }
.m.gr { background: linear-gradient(#232728 20%, #0dc40d 20%); }
.m.bl { background: linear-gradient(#232728 88%, #1010b0 88%); }
.m.ye { background: linear-gradient(#232728 62%, #f4f42c 62%); }
.ant { width: 11px; height: 13px; }
.note { width: 18px; height: 20px; }
.bt { width: 12px; height: 18px; margin-left: -6px; }
.wf { width: 18px; height: 16px; margin-left: -8px; }
.task .pager { height: 31px; background: #24282a; }
.task .now { background: #666; border: 1px solid #e8e8e8; display: flex; align-items: center; justify-content: center; }
.task > .now + span { padding-left: 2px; }
.desk { width: 20px; height: 17px; }
```
